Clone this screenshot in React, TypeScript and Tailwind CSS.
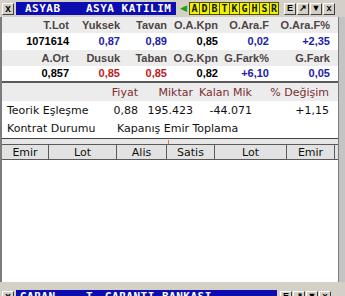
import React from "react";

const raised =
  "border border-t-white border-l-white border-b-[#404040] border-r-[#404040] bg-[#d4d0c8]";

const TitleBar: React.FC<{ code: string; mid?: string; name: string; wide?: boolean }> = ({
  code,
  mid,
  name,
  wide,
}) => (
  <div className="h-[17px] shrink-0 flex items-center pl-[2px] bg-[#d4d0c8]">
    <div className={`w-[12px] h-[12px] ${raised} flex items-center justify-center text-[10px] font-bold leading-none text-black`}>
      x
    </div>
    <div
      className={`ml-[2px] h-[13px] bg-[#0c0cb0] flex items-center text-white font-bold text-[11px] tracking-[0.5px] leading-none font-['DejaVu_Sans_Mono',monospace] ${
        wide ? "w-[261px]" : "w-[160px]"
      }`}
    >
      <span className={`w-[70px] ${wide ? "pl-[4px]" : "pl-[9px]"}`}>{code}</span>
      {mid && <span className="w-[19px]">{mid}</span>}
      <span className="whitespace-nowrap">{name}</span>
    </div>
    {!wide && (
      <div className="flex items-center h-[14px] ml-[1px]">
        <span className="w-[12px] h-[12px] flex items-center justify-center text-[#18a018] text-[9px] leading-none">◀</span>
        {["A", "D", "B", "T", "K", "G", "H", "S", "R"].map((l) => (
          <span
            key={l}
            className="w-[10px] h-[13px] bg-[#f2f200] border-l border-t border-b border-[#505000] last:border-r flex items-center justify-center text-[10px] font-bold leading-none text-[#102008] font-['DejaVu_Sans_Mono',monospace]"
          >
            {l}
          </span>
        ))}
      </div>
    )}
    <div className={`flex gap-px ${wide ? "ml-[3px]" : "ml-[5px]"}`}>
      {["E", "↗", "▼", "x"].map((b) => (
        <span
          key={b}
          className={`w-[12px] h-[12px] ${raised} flex items-center justify-center text-[9px] font-bold leading-none text-black`}
        >
          {b}
        </span>
      ))}
    </div>
  </div>
);

const blue = "text-[#1c1ca8]";
const red = "text-[#c01c1c]";

const top = [
  {
    head: ["T.Lot", "Yuksek", "Tavan", "O.A.Kpn", "O.Ara.F", "O.Ara.F%"],
    vals: [
      ["1071614", "text-black"],
      ["0,87", blue],
      ["0,89", blue],
      ["0,85", "text-black"],
      ["0,02", blue],
      ["+2,35", blue],
    ],
  },
  {
    head: ["A.Ort", "Dusuk", "Taban", "O.G.Kpn", "G.Fark%", "G.Fark"],
    vals: [
      ["0,857", "text-black"],
      ["0,85", red],
      ["0,85", red],
      ["0,82", "text-black"],
      ["+6,10", blue],
      ["0,05", blue],
    ],
  },
];

const topCols = "grid grid-cols-[67px_51px_47px_51px_51px_61px]";
const midCols = "grid grid-cols-[109px_27px_55px_59px_77px]";

const cols: [string, string][] = [
  ["Emir", "w-[47px]"],
  ["Lot", "w-[68px]"],
  ["Alis", "w-[50px]"],
  ["Satis", "w-[48px]"],
  ["Lot", "w-[72px]"],
  ["Emir", "w-[48px]"],
];

export default function App() {
  return (
    <div className="w-[345px] h-[296px] overflow-hidden bg-[#d4d0c8] flex flex-col font-['Liberation_Sans',Arial,sans-serif] text-[11px] leading-none">
      <TitleBar code="ASYAB" name="ASYA KATILIM" />

      <div className="h-[271px] shrink-0 flex pb-[6px]">
        <div className="w-[338px] flex flex-col border-l-2 border-[#7c7c7c] bg-white">
          {top.map((r, i) => (
            <React.Fragment key={i}>
              <div className={`${topCols} h-[16px] items-center bg-[#ececec] text-[#4e4444] font-bold`}>
                {r.head.map((h) => (
                  <span key={h} className="text-right">
                    {h}
                  </span>
                ))}
              </div>
              <div className={`${topCols} ${i === 0 ? "h-[17px]" : "h-[15px]"} items-center bg-white font-bold`}>
                {r.vals.map(([v, c], j) => (
                  <span key={j} className={`text-right ${c}`}>
                    {v}
                  </span>
                ))}
              </div>
            </React.Fragment>
          ))}

          <div className="h-[2px] bg-[#5a5a5a]" />

          <div className="font-['DejaVu_Sans',sans-serif]">
            <div className={`${midCols} h-[18px] items-center bg-[#ececec] text-[#7c2e2e]`}>
              <span />
              <span className="text-right">Fiyat</span>
              <span className="text-right">Miktar</span>
              <span className="text-right">Kalan Mik</span>
              <span className="text-right">% Değişim</span>
            </div>
            <div className={`${midCols} h-[18px] items-center text-[#111]`}>
              <span className="pl-[5px] whitespace-nowrap">Teorik Eşleşme</span>
              <span className="text-right">0,88</span>
              <span className="text-right">195.423</span>
              <span className="text-right">-44.071</span>
              <span className="text-right">+1,15</span>
            </div>
            <div className={`${midCols} h-[19px] items-center text-[#111]`}>
              <span className="pl-[5px] whitespace-nowrap">Kontrat Durumu</span>
              <span className="col-span-4 pl-[6px]">Kapanış Emir Toplama</span>
            </div>
          </div>

          <div className="flex-1 flex flex-col border-t border-[#404040] bg-white font-['DejaVu_Sans',sans-serif]">
            <div className="h-[5px] bg-[#e6e6e6] relative">
              <span className="absolute left-[166px] top-[1px] w-px h-[4px] bg-[#e07070]" />
            </div>
            <div className="flex h-[16px] border-t border-b border-[#5a5a5a] bg-[#e2e2e2] text-[#111]">
              {cols.map(([t, w], i) => (
                <span
                  key={i}
                  className={`${w} border-r border-[#5a5a5a] flex items-center justify-center`}
                >
                  {t}
                </span>
              ))}
            </div>
            <div className="flex-1 bg-white" />
          </div>
        </div>
        <div className="flex-1 border-l border-[#7c7c7c] bg-[#c4c4c4]" />
      </div>

      <TitleBar code="GARAN" mid="T" name="GARANTI BANKASI" wide />
    </div>
  );
}
